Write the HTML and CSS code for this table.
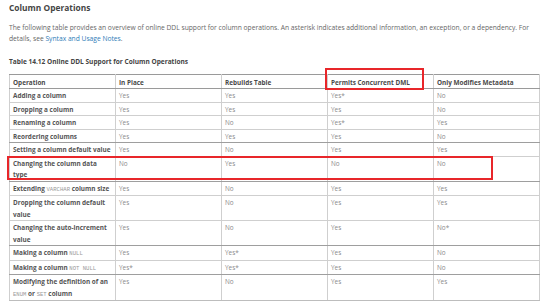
FILE: index.html
```html
<!DOCTYPE html>
<html>
<head>
<meta charset="utf-8">
<link rel="stylesheet" href="styles.css">
</head>
<body>
<div class="page">
  <h3 class="title">Column Operations</h3>
  <p class="intro">The following table provides an overview of online DDL support for column operations. An asterisk indicates additional information, an exception, or a dependency. For details, see <a class="link">Syntax and Usage Notes</a>.</p>
  <p class="caption">Table 14.12 Online DDL Support for Column Operations</p>
  <table class="ddl">
    <colgroup><col><col><col><col><col></colgroup>
    <thead>
      <tr><th>Operation</th><th>In Place</th><th>Rebuilds Table</th><th>Permits Concurrent DML</th><th>Only Modifies Metadata</th></tr>
    </thead>
    <tbody>
      <tr><th>Adding a column</th><td>Yes</td><td>Yes</td><td>Yes*</td><td>No</td></tr>
      <tr><th>Dropping a column</th><td>Yes</td><td>Yes</td><td>Yes</td><td>No</td></tr>
      <tr><th>Renaming a column</th><td>Yes</td><td>No</td><td>Yes*</td><td>Yes</td></tr>
      <tr class="dark"><th>Reordering columns</th><td>Yes</td><td>Yes</td><td>Yes</td><td>No</td></tr>
      <tr><th>Setting a column default value</th><td>Yes</td><td>No</td><td>Yes</td><td>Yes</td></tr>
      <tr class="dark"><th>Changing the column data type</th><td>No</td><td>Yes</td><td>No</td><td>No</td></tr>
      <tr><th>Extending <code>VARCHAR</code> column size</th><td>Yes</td><td>No</td><td>Yes</td><td>Yes</td></tr>
      <tr><th>Dropping the column default value</th><td>Yes</td><td>No</td><td>Yes</td><td>Yes</td></tr>
      <tr class="dark"><th>Changing the auto-increment value</th><td>Yes</td><td>No</td><td>Yes</td><td>No*</td></tr>
      <tr><th>Making a column <code>NULL</code></th><td>Yes</td><td>Yes*</td><td>Yes</td><td>No</td></tr>
      <tr class="dark"><th>Making a column <code>NOT NULL</code></th><td>Yes*</td><td>Yes*</td><td>Yes</td><td>No</td></tr>
      <tr><th>Modifying the definition of an <code>ENUM</code> or <code>SET</code> column</th><td>Yes</td><td>No</td><td>Yes</td><td>Yes</td></tr>
    </tbody>
  </table>
  <div class="mark mark-dml"></div>
  <div class="mark mark-row"></div>
</div>
</body>
</html>
```

FILE: styles.css
```css
html, body {
  margin: 0;
  padding: 0;
  background: #fff;
}
body {
  font-family: "Open Sans", "DejaVu Sans", sans-serif;
  color: #666;
}
.page {
  position: relative;
  padding: 2px 14px 0 9px;
}
.title {
  margin: 0;
  font-size: 8.4px;
  line-height: 12px;
  font-weight: 700;
  color: #444;
}
.intro {
  margin: 7.5px 0 0;
  font-size: 6.7px;
  line-height: 11px;
  color: #666;
}
.link {
  color: #2f7db8;
}
.caption {
  margin: 12px 0 0;
  font-size: 6.55px;
  line-height: 11px;
  font-weight: 700;
  color: #444;
}
.ddl {
  margin-top: 7.5px;
  width: 531px;
  table-layout: fixed;
  border-collapse: collapse;
  font-size: 6.4px;
  line-height: 11.5px;
}
.ddl col {
  width: 20%;
}
.ddl th, .ddl td {
  border: 1px solid #cfcfcf;
  padding: 1px 3px 0;
  text-align: left;
  vertical-align: top;
}
.ddl th {
  font-weight: 700;
  color: #555;
}
.ddl td {
  color: #8a8a8a;
  font-weight: 400;
}
.ddl thead th {
  color: #4a4a4a;
  border-top-color: #9a9a9a;
  border-bottom-color: #9a9a9a;
  padding-top: 1.5px;
}
.ddl tr.dark th, .ddl tr.dark td {
  border-bottom-color: #9e9e9e;
}
.ddl tbody tr:last-child th, .ddl tbody tr:last-child td {
  border-bottom-color: #bdbdbd;
}
.ddl code {
  font-family: "Liberation Mono", "DejaVu Sans Mono", monospace;
  font-size: 5.6px;
  color: #999;
  font-weight: 400;
}
.mark {
  position: absolute;
  border: 2px solid #e8262a;
  box-sizing: border-box;
}
.mark-dml {
  left: 325px;
  top: 68px;
  width: 99px;
  height: 22px;
}
.mark-row {
  left: 7px;
  top: 156px;
  width: 486px;
  height: 24px;
}
```
